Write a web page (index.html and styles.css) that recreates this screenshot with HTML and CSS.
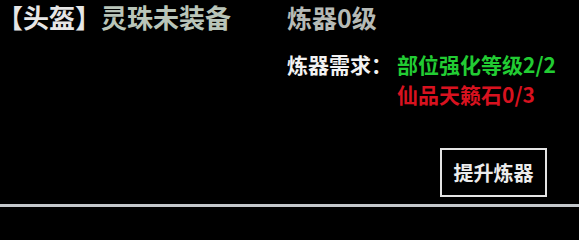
FILE: index.html
```html
<!DOCTYPE html>
<html lang="zh-CN">
<head>
<meta charset="utf-8">
<title>炼器</title>
<link rel="stylesheet" href="styles.css">
</head>
<body>
<div class="screen">
  <div class="panel">
    <div class="grid">
      <div class="title"><span class="slot">【头盔】</span><span class="item">灵珠未装备</span></div>
      <div class="level">炼器0级</div>
      <div class="req">
        <div class="req-label">炼器需求：</div>
        <div class="req-list">
          <div class="ok">部位强化等级2/2</div>
          <div class="bad">仙品天籁石0/3</div>
        </div>
      </div>
    </div>
    <div class="actions">
      <div class="btn">提升炼器</div>
    </div>
  </div>
  <div class="footer"></div>
</div>
</body>
</html>
```

FILE: styles.css
```css
html {
  height: 207px;
  overflow: hidden;
  background: #000;
}
body {
  margin: 0;
  padding: 0;
  background: #000;
  font-family: "Noto Sans CJK SC", "Noto Sans", sans-serif;
  font-weight: bold;
  width: 579px;
  height: 207px;
  overflow: hidden;
}
.screen {
  display: flex;
  flex-direction: column;
  height: 207px;
}
.panel {
  flex: 1;
  display: flex;
  flex-direction: column;
  padding-top: 2px;
}
.grid {
  display: grid;
  grid-template-columns: 287px 1fr;
  align-items: end;
}
.title {
  font-size: 26px;
  line-height: 30px;
  white-space: nowrap;
  margin-left: -3px;
}
.slot {
  color: #e6e6e6;
}
.item {
  color: #b9c5b9;
}
.level {
  font-size: 25px;
  line-height: 30px;
  color: #b6bab6;
}
.req {
  grid-column: 2;
  display: flex;
  margin-top: 17px;
  font-size: 21px;
  line-height: 30px;
}
.req-label {
  width: 110px;
  color: #f2f2f2;
}
.ok {
  color: #22cc33;
}
.bad {
  color: #d8121f;
}
.actions {
  display: flex;
  justify-content: flex-end;
  padding-right: 32px;
  margin-top: 39px;
}
.btn {
  box-sizing: border-box;
  width: 107px;
  height: 49px;
  border: 2px solid #e4e4e4;
  color: #ececec;
  font-size: 20px;
  display: flex;
  align-items: center;
  justify-content: center;
}
.footer {
  height: 3px;
  background: #c4c8cc;
}
```
